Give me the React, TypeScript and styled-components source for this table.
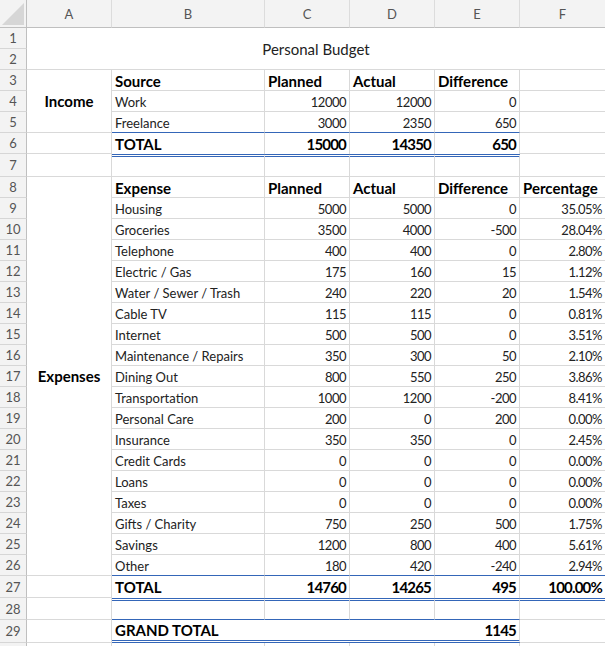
import React from "react";
import styled, { createGlobalStyle } from "styled-components";

const GRID = "#d9d9d9";
const BLUE = "#3466b8";
const HEAD_BG = "#f3f3f3";
const HEAD_EDGE = "#bfbfbf";

type Line = "grid" | "blue" | "double" | "none";
type Align = "left" | "right" | "center";

interface CellDef {
  row: number;
  col: number;
  span?: number;
  rows?: number;
  text?: string;
  align?: Align;
  bold?: boolean;
  title?: boolean;
  mid?: boolean;
  num?: boolean;
  top?: Line;
  bottom?: Line;
  right?: Line;
}

const GlobalStyle = createGlobalStyle`
  html, body {
    margin: 0;
    padding: 0;
    background: #fff;
    overflow: hidden;
  }
  body {
    font-family: Lato, "Open Sans", sans-serif;
  }
`;

const columns = ["A", "B", "C", "D", "E", "F"];

// sheet rows 1..30 (row 30 only peeks in at the bottom edge)
const rowHeights = [
  21, 21, 21, 21, 21, 21, 23,
  21, 21, 21, 21, 21, 21, 21, 21, 21, 21, 21, 21, 21, 21, 21, 21, 21, 21, 21,
  22, 22, 23, 21,
];
const LAST_LABELLED = 29;

const expenses: [string, number, number, number, string][] = [
  ["Housing", 5000, 5000, 0, "35.05%"],
  ["Groceries", 3500, 4000, -500, "28.04%"],
  ["Telephone", 400, 400, 0, "2.80%"],
  ["Electric / Gas", 175, 160, 15, "1.12%"],
  ["Water / Sewer / Trash", 240, 220, 20, "1.54%"],
  ["Cable TV", 115, 115, 0, "0.81%"],
  ["Internet", 500, 500, 0, "3.51%"],
  ["Maintenance / Repairs", 350, 300, 50, "2.10%"],
  ["Dining Out", 800, 550, 250, "3.86%"],
  ["Transportation", 1000, 1200, -200, "8.41%"],
  ["Personal Care", 200, 0, 200, "0.00%"],
  ["Insurance", 350, 350, 0, "2.45%"],
  ["Credit Cards", 0, 0, 0, "0.00%"],
  ["Loans", 0, 0, 0, "0.00%"],
  ["Taxes", 0, 0, 0, "0.00%"],
  ["Gifts / Charity", 750, 250, 500, "1.75%"],
  ["Savings", 1200, 800, 400, "5.61%"],
  ["Other", 180, 420, -240, "2.94%"],
];

const buildCells = (): CellDef[] => {
  const cells: CellDef[] = [];
  const blank = (row: number, col: number, extra: Partial<CellDef> = {}) =>
    cells.push({ row, col, ...extra });

  cells.push({ row: 1, col: 0, span: 6, rows: 2, text: "Personal Budget", title: true, align: "center", mid: true });

  // income block
  cells.push({ row: 3, col: 0, rows: 3, text: "Income", bold: true, align: "center", mid: true });
  ["Source", "Planned", "Actual", "Difference"].forEach((t, i) =>
    cells.push({ row: 3, col: i + 1, text: t, bold: true })
  );
  blank(3, 5);
  const income: [string, number, number, number][] = [
    ["Work", 12000, 12000, 0],
    ["Freelance", 3000, 2350, 650],
  ];
  income.forEach(([label, p, a, d], i) => {
    const row = 4 + i;
    const bottom: Line = row === 5 ? "blue" : "grid";
    cells.push({ row, col: 1, text: label, bottom });
    [p, a, d].forEach((v, j) =>
      cells.push({ row, col: j + 2, text: String(v), align: "right", num: true, bottom })
    );
    blank(row, 5);
  });
  blank(6, 0);
  cells.push({ row: 6, col: 1, text: "TOTAL", bold: true, mid: true, bottom: "none" });
  ["15000", "14350", "650"].forEach((t, j) =>
    cells.push({ row: 6, col: j + 2, text: t, bold: true, num: true, mid: true, align: "right", bottom: "none" })
  );
  blank(6, 5);
  blank(7, 0);
  [1, 2, 3, 4].forEach((c) => blank(7, c, { top: "double" }));
  blank(7, 5);

  // expenses block
  cells.push({ row: 8, col: 0, rows: 19, text: "Expenses", bold: true, align: "center", mid: true });
  ["Expense", "Planned", "Actual", "Difference", "Percentage"].forEach((t, i) =>
    cells.push({ row: 8, col: i + 1, text: t, bold: true })
  );
  expenses.forEach(([label, p, a, d, pct], i) => {
    const row = 9 + i;
    const bottom: Line = row === 26 ? "blue" : "grid";
    cells.push({ row, col: 1, text: label, bottom });
    [String(p), String(a), String(d), pct].forEach((t, j) =>
      cells.push({ row, col: j + 2, text: t, align: "right", num: true, bottom })
    );
  });
  blank(27, 0);
  cells.push({ row: 27, col: 1, text: "TOTAL", bold: true, mid: true, bottom: "none" });
  ["14760", "14265", "495", "100.00%"].forEach((t, j) =>
    cells.push({ row: 27, col: j + 2, text: t, bold: true, num: true, mid: true, align: "right", bottom: "none" })
  );
  blank(28, 0);
  [1, 2, 3, 4].forEach((c) => blank(28, c, { top: "double", bottom: "blue" }));
  blank(28, 5, { top: "double" });
  blank(29, 0);
  cells.push({ row: 29, col: 1, span: 3, text: "GRAND TOTAL", bold: true, mid: true, bottom: "double", right: "none" });
  cells.push({ row: 29, col: 4, text: "1145", bold: true, num: true, mid: true, align: "right", bottom: "double" });
  blank(29, 5);
  [0, 1, 2, 3, 4, 5].forEach((c) => blank(30, c));
  return cells;
};

const lineCss = (l: Line) => {
  if (l === "none") return "0";
  if (l === "double") return `3px double ${BLUE}`;
  if (l === "blue") return `1px solid ${BLUE}`;
  return `1px solid ${GRID}`;
};

const Sheet = styled.div`
  display: grid;
  grid-template-columns: 27px 85px 153px 85px 85px 85px 86px;
  grid-template-rows: 28px ${rowHeights.map((h) => `${h}px`).join(" ")};
  width: 606px;
  height: 646px;
  overflow: hidden;
`;

const Corner = styled.div`
  grid-row: 1;
  grid-column: 1;
  background: ${HEAD_BG};
  border-right: 1px solid ${HEAD_EDGE};
  border-bottom: 1px solid ${HEAD_EDGE};
  box-sizing: border-box;
  display: flex;
  align-items: flex-end;
  justify-content: flex-end;
  padding: 0 2px 2px 0;

  svg {
    display: block;
  }
`;

const ColHead = styled.div<{ $col: number }>`
  grid-row: 1;
  grid-column: ${(p) => p.$col + 2};
  background: ${HEAD_BG};
  border-right: 1px solid #dcdcdc;
  border-bottom: 1px solid ${HEAD_EDGE};
  box-sizing: border-box;
  display: flex;
  align-items: center;
  justify-content: center;
  font-size: 13px;
  color: #555;
`;

const RowHead = styled.div<{ $row: number }>`
  grid-row: ${(p) => p.$row + 1};
  grid-column: 1;
  background: ${HEAD_BG};
  border-right: 1px solid ${HEAD_EDGE};
  border-bottom: 1px solid #d6d6d6;
  box-sizing: border-box;
  display: flex;
  align-items: center;
  justify-content: center;
  font-size: 13px;
  color: #555;
`;

const Cell = styled.div<{
  $row: number;
  $rows: number;
  $col: number;
  $span: number;
  $align: Align;
  $bold: boolean;
  $title: boolean;
  $mid: boolean;
  $num: boolean;
  $top: Line;
  $bottom: Line;
  $right: Line;
}>`
  grid-row: ${(p) => `${p.$row + 1} / span ${p.$rows}`};
  grid-column: ${(p) => `${p.$col + 2} / span ${p.$span}`};
  box-sizing: border-box;
  display: flex;
  align-items: ${(p) => (p.$mid ? "center" : "flex-end")};
  justify-content: ${(p) =>
    p.$align === "right" ? "flex-end" : p.$align === "center" ? "center" : "flex-start"};
  padding: 0 3px;
  border-top: ${(p) => lineCss(p.$top)};
  border-right: ${(p) => lineCss(p.$right)};
  border-bottom: ${(p) => lineCss(p.$bottom)};
  font-size: ${(p) => (p.$bold || p.$title ? "15px" : "13px")};
  font-weight: ${(p) => (p.$bold ? 700 : 400)};
  letter-spacing: ${(p) => (p.$num ? (p.$bold ? "-0.8px" : "-0.5px") : "0")};
  color: ${(p) => (p.$bold ? "#000" : "#222")};
  line-height: 1.2;
  white-space: nowrap;
  overflow: hidden;
`;

export default function App() {
  const cells = buildCells();
  return (
    <>
      <GlobalStyle />
      <Sheet>
        <Corner>
          <svg width="22" height="22" viewBox="0 0 22 22">
            <polygon points="22,0 22,22 0,22" fill="#d6d6d6" />
          </svg>
        </Corner>
        {columns.map((c, i) => (
          <ColHead key={c} $col={i}>
            {c}
          </ColHead>
        ))}
        {rowHeights.map((_, i) => (
          <RowHead key={i} $row={i + 1}>
            {i + 1 <= LAST_LABELLED ? i + 1 : null}
          </RowHead>
        ))}
        {cells.map((c) => (
          <Cell
            key={`${c.row}-${c.col}`}
            $row={c.row}
            $rows={c.rows ?? 1}
            $col={c.col}
            $span={c.span ?? 1}
            $align={c.align ?? "left"}
            $bold={!!c.bold}
            $title={!!c.title}
            $mid={!!c.mid}
            $num={!!c.num}
            $top={c.top ?? "none"}
            $bottom={c.bottom ?? "grid"}
            $right={c.right ?? "grid"}
          >
            {c.text}
          </Cell>
        ))}
      </Sheet>
    </>
  );
}
